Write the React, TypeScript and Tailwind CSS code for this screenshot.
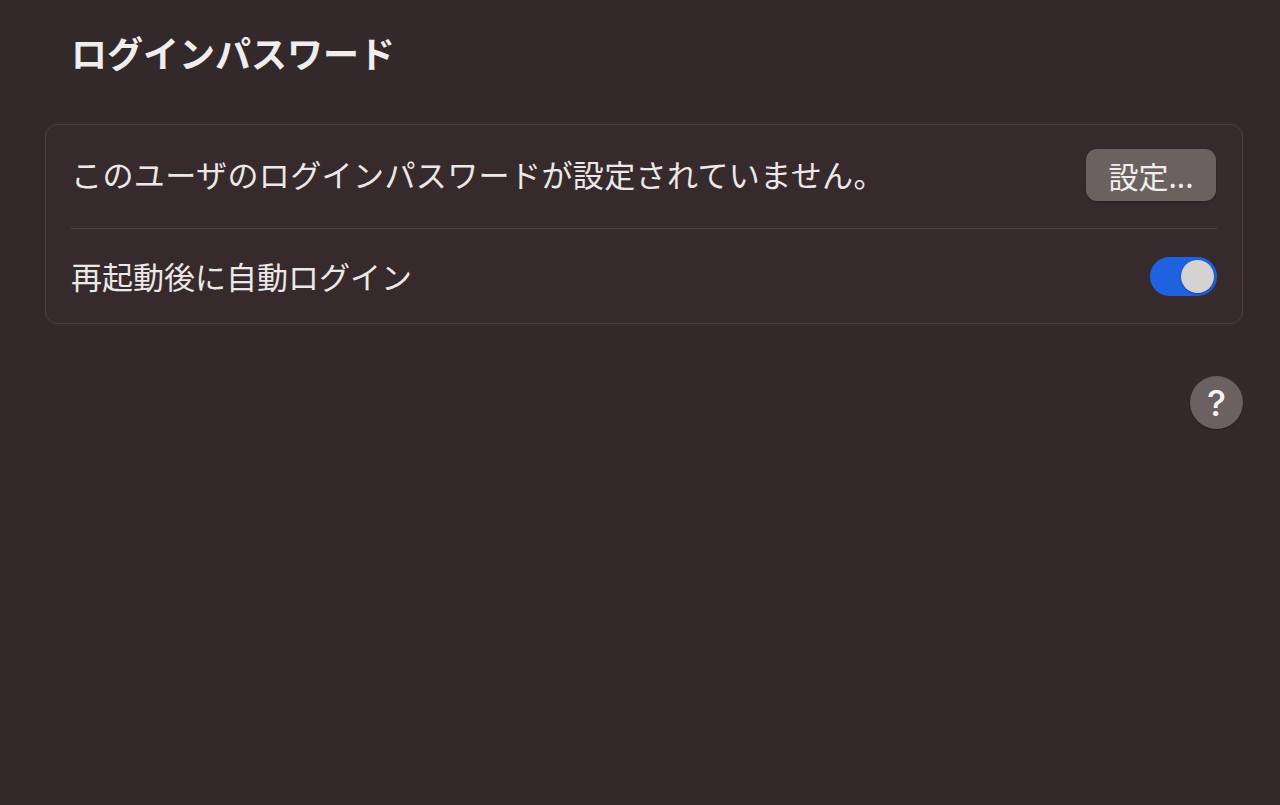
const font = { fontFamily: '"Noto Sans CJK JP", "Noto Sans", sans-serif' };

const Toggle = ({ on }: { on: boolean }) => (
  <div
    className={`w-[67px] h-[39px] rounded-full p-[3px] flex items-center ${
      on ? 'bg-[#1f62df] justify-end' : 'bg-[#5a5050] justify-start'
    }`}
  >
    <div className="w-[33px] h-[33px] rounded-full bg-[#d6d2d2] shadow-[0_1px_2px_rgba(0,0,0,0.3)]" />
  </div>
);

export default function App() {
  return (
    <div className="w-[1280px] h-[805px] bg-[#33282a] text-[#ece8e8] overflow-hidden" style={font}>
      <div className="pl-[45px] pr-[37px] pt-[28px]">
        <h1 className="pl-[26px] text-[36px] font-bold leading-[48px] text-[#f1eded]">
          ログインパスワード
        </h1>

        <div className="mt-[48px] rounded-[12px] border border-[#4b4042] bg-[#362a2c]">
          <div className="mx-[25px] h-[104px] pb-[3px] flex items-center justify-between border-b border-[#4b4042]">
            <span className="text-[31px] tracking-[0.4px] leading-none -mt-[3px]">
              このユーザのログインパスワードが設定されていません。
            </span>
            <button className="mr-px w-[130px] h-[52px] rounded-[11px] bg-[#6b6260] text-[30px] leading-none text-[#f1eded] shadow-[0_1px_2px_rgba(0,0,0,0.3)]">
              設定...
            </button>
          </div>
          <div className="mx-[25px] h-[94px] flex items-center justify-between">
            <span className="text-[31px] leading-none -mt-[1px]">再起動後に自動ログイン</span>
            <Toggle on />
          </div>
        </div>

        <div className="flex justify-end mt-[52px]">
          <button
            className="w-[53px] h-[53px] rounded-full bg-[#6a6160] text-[36px] font-medium leading-none text-[#f5f2f2] flex items-center justify-center shadow-[0_1px_2px_rgba(0,0,0,0.3)]"
            style={{ fontFamily: 'Inter, "Liberation Sans", sans-serif' }}
          >
            ?
          </button>
        </div>
      </div>
    </div>
  );
}
